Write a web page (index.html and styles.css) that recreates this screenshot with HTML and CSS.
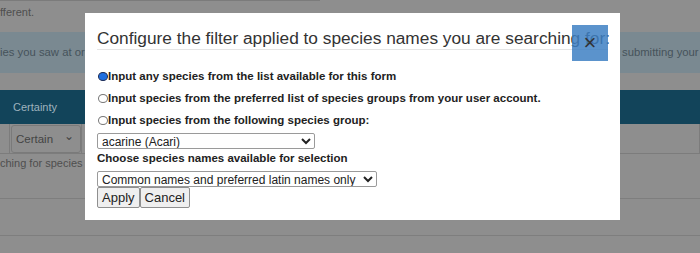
FILE: index.html
```html
<!DOCTYPE html>
<html lang="en">
<head>
  <meta charset="UTF-8">
  <title>Species filter</title>
  <link rel="stylesheet" href="styles.css">
</head>
<body>

  <!-- Page under the dialog -->
  <div class="page">
    <div class="top-line"></div>
    <p class="note">fferent.</p>
    <div class="info">
      <span>ies you saw at or</span>
      <span>submitting your</span>
    </div>
    <div class="grid-head">
      <span class="th-edge"></span>
      <span class="th">Certainty</span>
      <span class="th">C</span>
    </div>
    <div class="grid-row">
      <div class="cell-edge"></div>
      <div class="cell">
        <div class="fake-select">Certain <span class="chev">&#8964;</span></div>
      </div>
      <div class="cell"></div>
    </div>
    <p class="hint">ching for species n</p>
    <div class="rule rule-one"></div>
    <div class="rule"></div>
  </div>

  <!-- Filter dialog -->
  <div class="dialog">
    <h4 class="dialog-title">Configure the filter applied to species names you are searching for:</h4>
    <button class="close-btn">&times;</button>

    <label class="opt"><input type="radio" name="filter" checked>Input any species from the list available for this form</label>
    <label class="opt"><input type="radio" name="filter">Input species from the preferred list of species groups from your user account.</label>
    <label class="opt"><input type="radio" name="filter">Input species from the following species group:</label>

    <select class="group-select">
      <option>acarine (Acari)</option>
    </select>

    <div class="names-label">Choose species names available for selection</div>
    <select class="names-select">
      <option>Common names and preferred latin names only</option>
    </select>

    <div class="actions">
      <button class="btn">Apply</button><button class="btn">Cancel</button>
    </div>
  </div>

</body>
</html>
```

FILE: styles.css
```css
body {
  margin: 0;
  padding: 0;
  height: 253px;
  background: #8e8e8e;
  font-family: 'Liberation Sans', Arial, sans-serif;
  overflow: hidden;
  position: relative;
}

.page {
  font-size: 11px;
  color: #4e4e4e;
}

.top-line {
  width: 320px;
  height: 1px;
  background: #7b7b7b;
}

.note {
  margin: 0;
  height: 31px;
  line-height: 22px;
}

.info {
  display: grid;
  grid-template-columns: 622px 1fr;
  height: 41px;
  line-height: 41px;
  font-size: 11.3px;
  background: #7a8991;
  color: #46535b;
  white-space: nowrap;
  overflow: hidden;
}

.grid-head {
  display: grid;
  grid-template-columns: 10px 72px 1fr;
  margin-top: 17px;
  height: 34px;
  line-height: 34px;
  background: #12445a;
  color: #9fb3be;
}

.th { padding-left: 3px; }

.grid-row {
  display: grid;
  grid-template-columns: 10px 72px 1fr;
  height: 29px;
  border-bottom: 1px solid #7c7c7c;
}

.cell-edge,
.cell {
  border-right: 1px solid #7c7c7c;
}

.cell { padding: 1px 0 0 1px; }

.fake-select {
  display: flex;
  justify-content: space-between;
  height: 26px;
  line-height: 26px;
  padding: 0 6px 0 4px;
  border: 1px solid #7a7a7a;
  border-radius: 3px;
  font-size: 11.5px;
  color: #444;
}

.chev {
  font-size: 12px;
  line-height: 20px;
}

.hint {
  margin: 0;
  height: 18px;
  line-height: 18px;
}

.rule {
  height: 1px;
  background: #7e7e7e;
  margin-top: 36px;
}

.rule.rule-one { margin-top: 26px; }

/* dialog */

.dialog {
  position: absolute;
  left: 85px;
  top: 13px;
  width: 511px;
  height: 207px;
  padding: 0 12px;
  background: #fff;
  color: #222;
}

.dialog-title {
  margin: 0 0 15px;
  padding-top: 14px;
  line-height: 22px;
  font-size: 17.3px;
  font-weight: normal;
  color: #333;
  white-space: nowrap;
  border-bottom: 1px solid #e5e5e5;
}

.close-btn {
  position: absolute;
  top: 12px;
  right: 12px;
  width: 36px;
  height: 36px;
  border: none;
  padding: 0;
  background: rgba(62, 128, 195, 0.85);
  color: #333;
  font-size: 22px;
  line-height: 36px;
}

.opt {
  display: flex;
  align-items: center;
  height: 22px;
  font-size: 11.5px;
  font-weight: bold;
  color: #222;
}

.opt input {
  appearance: none;
  width: 10px;
  height: 9px;
  margin: 0 0 0 1px;
  border: 1px solid #777;
  border-radius: 50%;
  background: #fff;
}

.opt input:checked {
  background: #1f6fe0;
  border-color: #1a2a55;
}

.group-select,
.names-select {
  display: block;
  height: 16px;
  padding: 0;
  border: 1px solid #9a9a9a;
  border-radius: 2px;
  background: #fff;
  font-family: 'Liberation Sans', Arial, sans-serif;
  font-size: 12px;
  color: #222;
}

.group-select {
  width: 218px;
  margin-top: 2px;
}

.names-select {
  width: 280px;
  margin-top: 4px;
}

.names-label {
  height: 18px;
  line-height: 18px;
  font-size: 11.5px;
  font-weight: bold;
  color: #222;
}

.actions { display: flex; }

.btn {
  height: 21px;
  padding: 0 4px;
  border: 1px solid #8f8f8f;
  border-radius: 2px;
  background: #efefef;
  font-family: 'Liberation Sans', Arial, sans-serif;
  font-size: 13px;
  color: #222;
}
```
